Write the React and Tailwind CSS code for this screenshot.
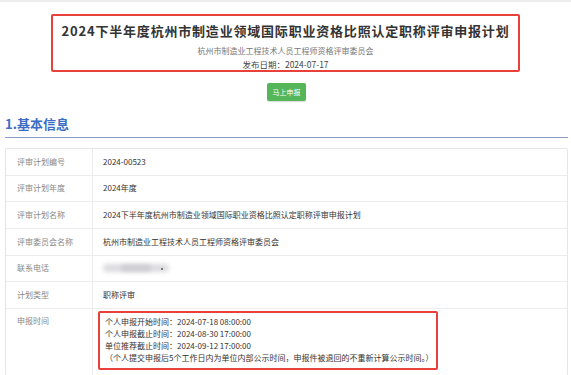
import React from 'react';

const font = { fontFamily: '"Noto Sans CJK SC", "Noto Sans", sans-serif' };

const rows = [
  ['评审计划编号', '2024-00523'],
  ['评审计划年度', '2024年度'],
  ['评审计划名称', '2024下半年度杭州市制造业领域国际职业资格比照认定职称评审申报计划'],
  ['评审委员会名称', '杭州市制造业工程技术人员工程师资格评审委员会'],
  ['联系电话', null],
  ['计划类型', '职称评审'],
];

const times = [
  '个人申报开始时间：2024-07-18 08:00:00',
  '个人申报截止时间：2024-08-30 17:00:00',
  '单位推荐截止时间：2024-09-12 17:00:00',
  '（个人提交申报后5个工作日内为单位内部公示时间，申报件被退回的不重新计算公示时间。）',
];

function BlurPhone() {
  return (
    <div className="relative h-[8px] w-[66px]">
      <div className="absolute inset-0 rounded-full bg-[#dcdce0] blur-[2px]" />
      <div className="absolute left-[18px] top-[1px] h-[6px] w-[30px] rounded-full bg-[#cdcdd2] blur-[2px]" />
      <div className="absolute left-[58px] top-[4px] h-[2px] w-[2px] bg-[#777]" />
    </div>
  );
}

export default function App() {
  return (
    <div className="w-[571px] h-[375px] overflow-hidden bg-white" style={font}>
      <div className="h-[2px] bg-[#ededed]" />

      {/* Header */}
      <div className="mx-auto mt-[12px] w-[469px] h-[58px] border-2 border-[#e8403a] rounded-[2px] text-center">
        <div className="pt-[5px] text-[13px] leading-[20px] font-bold tracking-[0.8px] text-[#333]">
          2024下半年度杭州市制造业领域国际职业资格比照认定职称评审申报计划
        </div>
        <div className="mt-[4px] text-[8px] leading-[12px] text-[#777]">杭州市制造业工程技术人员工程师资格评审委员会</div>
        <div className="mt-[1px] text-[8.5px] leading-[12px] text-[#444]">发布日期：2024-07-17</div>
      </div>

      <div className="flex justify-center pl-[2px] mt-[11px]">
        <button className="h-[18px] w-[39px] rounded-[2px] bg-[#55b559] text-[7px] text-white shadow-[0_1px_1px_rgba(0,0,0,0.15)]">
          马上申报
        </button>
      </div>

      {/* Section */}
      <div className="ml-[5px] mr-[3px] mt-[14px]">
        <div className="border-b-[1.5px] border-[#8b9cc6] pb-[4px] text-[13px] leading-[18px] font-bold text-[#3b6dc4]">
          1.基本信息
        </div>

        <div className="mt-[10px] border border-[#e6e6e6] rounded-[2px] text-[8px]">
          {rows.map(([label, value]) => (
            <div key={label} className="flex h-[26.67px] border-b border-[#ececec]">
              <div className="w-[87px] shrink-0 flex items-center pl-[11px] border-r border-[#ececec] text-[#888]">{label}</div>
              <div className="flex-1 flex items-center pl-[10px] text-[#333]">
                {value === null ? <BlurPhone /> : value}
              </div>
            </div>
          ))}
          <div className="flex h-[66px]">
            <div className="w-[87px] shrink-0 pl-[11px] pt-[6px] border-r border-[#ececec] text-[#888] leading-[12px]">申报时间</div>
            <div className="flex-1 pl-[5px] pt-[2px]">
              <div className="w-fit border-2 border-[#e8403a] rounded-[2px] pl-[5px] pr-[3px] pt-[3px] pb-[4px] text-[#333] leading-[12px]">
                {times.map((t) => (
                  <div key={t}>{t}</div>
                ))}
              </div>
            </div>
          </div>
        </div>
      </div>
    </div>
  );
}
